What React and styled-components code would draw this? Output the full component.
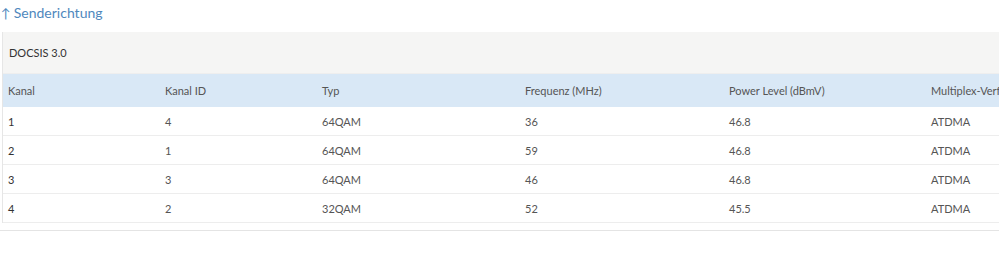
import React from 'react';
import styled, { createGlobalStyle } from 'styled-components';

const GlobalStyle = createGlobalStyle`
  body {
    margin: 0;
    background: #fff;
    font-family: Lato, "Liberation Sans", sans-serif;
    overflow: hidden;
  }
`;

const Page = styled.div`
  width: 999px;
  padding-top: 4px;
`;

const Title = styled.h2`
  margin: 0 0 0 1px;
  height: 28px;
  font-size: 14px;
  font-weight: 400;
  color: #4f88bd;
  line-height: 18px;
  display: flex;
  gap: 3px;
`;

const Arrow = styled.span`
  font-size: 13px;
`;

const Panel = styled.div`
  margin-left: 2px;
  border-left: 1px solid #e6e6e6;
  overflow: hidden;
`;

const PanelHeader = styled.div`
  height: 41px;
  display: flex;
  align-items: center;
  padding-left: 6px;
  background: #f5f5f4;
  font-size: 11px;
  color: #333;
  border-bottom: 1px solid #eeeeee;
`;

const Table = styled.table`
  border-collapse: collapse;
  table-layout: fixed;
  width: 1100px;
  font-size: 11px;
  color: #444;
`;

const HeadCell = styled.th`
  box-sizing: border-box;
  width: ${p => p.w}px;
  height: 33px;
  padding: 0 0 0 5px;
  text-align: left;
  font-weight: 400;
  color: #555;
  background: #d9e8f6;
  white-space: nowrap;
`;

const Cell = styled.td`
  height: 28px;
  padding: 0 0 0 5px;
  border-bottom: 1px solid #ededed;
  color: ${p => (p.first ? '#333' : '#555')};
`;

const Divider = styled.div`
  margin-top: 7px;
  border-top: 1px solid #e4e4e4;
`;

const columns = [
  { label: 'Kanal', w: 157 },
  { label: 'Kanal ID', w: 157 },
  { label: 'Typ', w: 203 },
  { label: 'Frequenz (MHz)', w: 204 },
  { label: 'Power Level (dBmV)', w: 202 },
  { label: 'Multiplex-Verfahren', w: 177 },
];

const rows = [
  ['1', '4', '64QAM', '36', '46.8', 'ATDMA'],
  ['2', '1', '64QAM', '59', '46.8', 'ATDMA'],
  ['3', '3', '64QAM', '46', '46.8', 'ATDMA'],
  ['4', '2', '32QAM', '52', '45.5', 'ATDMA'],
];

const App = () => (
  <Page>
    <GlobalStyle />
    <Title>
      <Arrow>↑</Arrow>
      <span>Senderichtung</span>
    </Title>
    <Panel>
      <PanelHeader>DOCSIS 3.0</PanelHeader>
      <Table>
        <thead>
          <tr>
            {columns.map(c => (
              <HeadCell key={c.label} w={c.w}>{c.label}</HeadCell>
            ))}
          </tr>
        </thead>
        <tbody>
          {rows.map((r, i) => (
            <tr key={i}>
              {r.map((v, j) => (
                <Cell key={j} first={j === 0}>{v}</Cell>
              ))}
            </tr>
          ))}
        </tbody>
      </Table>
    </Panel>
    <Divider />
  </Page>
);

export default App;
